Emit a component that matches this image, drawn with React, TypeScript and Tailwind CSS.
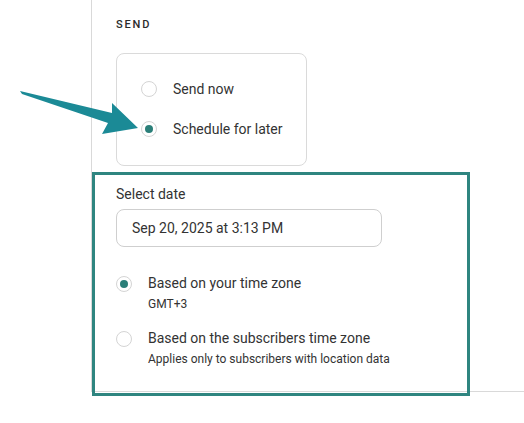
function Radio({ checked }: { checked?: boolean }) {
  return (
    <span className="flex h-4 w-4 shrink-0 items-center justify-center rounded-full border border-[#d4d4d4] bg-white">
      {checked && <span className="h-2 w-2 rounded-full bg-[#2b7f79]" />}
    </span>
  )
}

function Arrow() {
  return (
    <svg className="absolute left-0 top-0" width="160" height="150" viewBox="0 0 160 150">
      <polygon
        points="20,91 112,113 112,103 138,128 102,134 108,123 22,94"
        fill="#1b8a96"
      />
    </svg>
  )
}

export default function App() {
  return (
    <div className="relative h-[423px] w-[524px] overflow-hidden bg-white font-['Roboto',sans-serif] text-[#333]">
      <div className="ml-[91px] border-b border-l border-[#d9d9d9] pb-[24px] pl-[24px]">
        {/* Send */}
        <p className="pt-[17px] text-[11px] font-medium uppercase leading-4 tracking-[0.17em] text-[#2b2b2b]">
          Send
        </p>
        <div className="mt-[20px] flex w-[191px] flex-col gap-5 rounded-lg border border-[#dadada] pb-[26px] pl-[24px] pt-[25px]">
          <label className="flex items-center gap-4 text-sm leading-5">
            <Radio />
            Send now
          </label>
          <label className="flex items-center gap-4 text-sm leading-5">
            <Radio checked />
            Schedule for later
          </label>
        </div>

        {/* Date */}
        <p className="mt-[18px] text-sm leading-5">Select date</p>
        <div className="mt-[5px] flex h-[38px] w-[266px] items-center rounded-lg border border-[#cfcfcf] pl-[15px] text-sm">
          Sep 20, 2025 at 3:13 PM
        </div>

        <div className="mt-[26px] flex gap-4">
          <div className="pt-[3px]">
            <Radio checked />
          </div>
          <div>
            <p className="text-sm leading-5">Based on your time zone</p>
            <p className="mt-[3px] text-xs leading-4">GMT+3</p>
          </div>
        </div>
        <div className="mt-4 flex gap-4">
          <div className="pt-[3px]">
            <Radio />
          </div>
          <div>
            <p className="text-sm leading-5">Based on the subscribers time zone</p>
            <p className="mt-[3px] text-xs leading-4">Applies only to subscribers with location data</p>
          </div>
        </div>
      </div>

      {/* annotation */}
      <Arrow />
      <div className="pointer-events-none absolute left-[92px] top-[172px] h-[224px] w-[378px] border-[3px] border-[#2f8580]" />
    </div>
  )
}
